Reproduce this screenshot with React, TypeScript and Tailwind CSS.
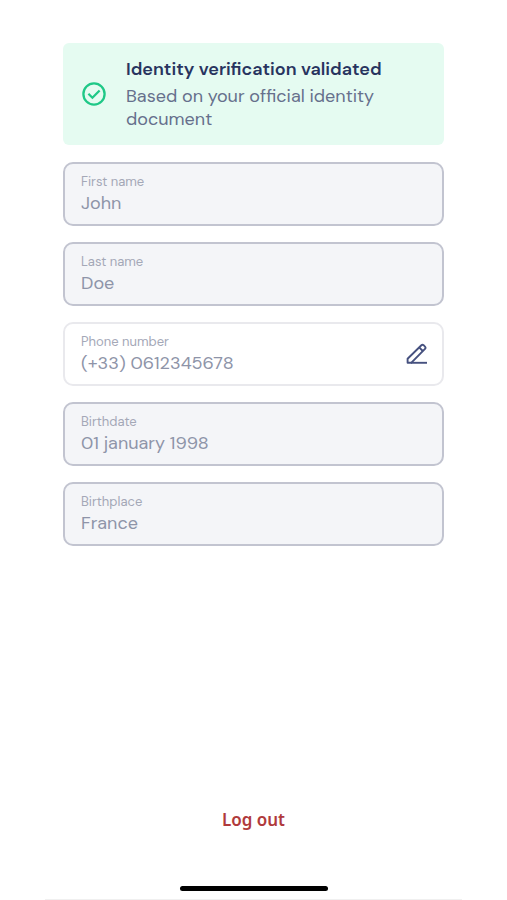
type Field = {
  id: string
  label: string
  value: string
  editable?: boolean
}

const FIELDS: Field[] = [
  { id: 'first-name', label: 'First name', value: 'John' },
  { id: 'last-name', label: 'Last name', value: 'Doe' },
  { id: 'phone', label: 'Phone number', value: '(+33) 0612345678', editable: true },
  { id: 'birthdate', label: 'Birthdate', value: '01 january 1998' },
  { id: 'birthplace', label: 'Birthplace', value: 'France' },
]

function CheckCircleIcon() {
  return (
    <svg width="24" height="24" viewBox="0 0 24 24" fill="none" stroke="#1fc887" strokeWidth="2.3" aria-hidden="true">
      <circle cx="12" cy="12" r="10.6" />
      <path d="M6.4 11.8l4 3.9 7.2-7.2" />
    </svg>
  )
}

function EditIcon() {
  return (
    <svg width="22" height="22" viewBox="0 0 22 22" fill="none" stroke="#46517f" strokeWidth="1.9" strokeLinejoin="round" aria-hidden="true">
      <path d="M1.6 15.8L15.4 2.2a1.6 1.6 0 0 1 2.2 0l1.4 1.4a1.6 1.6 0 0 1 0 2.2L5.2 19.8H1.6z" />
      <path d="M13.2 4.4l3.6 3.6" />
      <path d="M5 19.8h16" />
    </svg>
  )
}

function ProfileField({ id, label, value, editable }: Field) {
  return (
    <div
      className={
        editable
          ? 'flex h-16 items-center rounded-[10px] border-2 border-[#e9e9ed] bg-white pr-3.5 pl-4'
          : 'flex h-16 items-center rounded-[10px] border-2 border-[#c2c4d0] bg-[#f4f5f8] px-4'
      }
    >
      <div className="min-w-0 flex-1 pb-0.5">
        <label htmlFor={id} className="block text-[13px] leading-5 text-[#a4a8b7]">
          {label}
        </label>
        <input
          id={id}
          type="text"
          defaultValue={value}
          readOnly
          className="block h-[22px] w-full bg-transparent text-lg leading-[22px] text-[#8e94a8] outline-none"
        />
      </div>
      {editable && (
        <button type="button" aria-label={`Edit ${label}`} className="shrink-0 cursor-pointer">
          <EditIcon />
        </button>
      )}
    </div>
  )
}

export default function App() {
  return (
    <div className="flex min-h-screen flex-col bg-white font-['DM_Sans','Inter',sans-serif]">
      <main className="flex flex-1 flex-col px-[63px] pt-[43px]">
        {/* Verification status */}
        <section className="flex items-center gap-5 rounded-md bg-[#e5fbf1] py-3.5 pr-4 pl-[19px]">
          <CheckCircleIcon />
          <div className="min-w-0 flex-1">
            <h1 className="text-lg leading-6 font-semibold text-[#28345f]">Identity verification validated</h1>
            <p className="mt-1 text-lg leading-[23px] text-[#66708c]">Based on your official identity document</p>
          </div>
        </section>

        <form className="mt-[17px] flex flex-col gap-4">
          {FIELDS.map((field) => (
            <ProfileField key={field.id} {...field} />
          ))}
        </form>

        <button
          type="button"
          className="mt-auto cursor-pointer self-center text-[17px] leading-6 font-semibold text-[#b03a3c] font-['Noto_Sans',sans-serif]"
        >
          Log out
        </button>
      </main>

      {/* Home indicator */}
      <footer className="mx-[45px] mt-[54px] flex justify-center border-b border-[#f0f0f0] pb-2">
        <div className="h-[5px] w-[148px] rounded-full bg-black" />
      </footer>
    </div>
  )
}
